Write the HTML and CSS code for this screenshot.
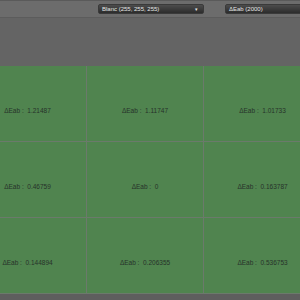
FILE: index.html
```html
<html>
  <head>
    <link rel="stylesheet" href="styles.css">
  </head>
  <body>
    <div class="toolbar">
      <div class="dropdown illum">
        <span>Blanc (255, 255, 255)</span>
        <span class="arrow">&#9662;</span>
      </div>
      <div class="dropdown metric">
        <span>&Delta;Eab (2000)</span>
      </div>
    </div>
    <div class="spacer"></div>
    <div class="view">
      <div class="grid">
        <div class="cell">&Delta;Eab :&nbsp; 1.21487</div>
        <div class="cell">&Delta;Eab :&nbsp; 1.11747</div>
        <div class="cell">&Delta;Eab :&nbsp; 1.01733</div>
        <div class="cell">&Delta;Eab :&nbsp; 0.46759</div>
        <div class="cell">&Delta;Eab :&nbsp; 0</div>
        <div class="cell">&Delta;Eab :&nbsp; 0.163787</div>
        <div class="cell">&Delta;Eab :&nbsp; 0.144894</div>
        <div class="cell">&Delta;Eab :&nbsp; 0.206355</div>
        <div class="cell">&Delta;Eab :&nbsp; 0.536753</div>
      </div>
    </div>
    <div class="footer"></div>
  </body>
</html>
```
FILE: styles.css
```css
body {
  margin: 0;
  width: 300px;
  height: 300px;
  overflow: hidden;
  background: #646464;
  font-family: "Liberation Sans", Arial, sans-serif;
}
.toolbar {
  height: 18px;
  box-sizing: border-box;
  background: #6c6c6c;
  border-top: 1px solid #5a5a5a;
  border-bottom: 1px solid #5c5c5c;
  display: flex;
  align-items: center;
  overflow: hidden;
}
.dropdown {
  height: 10px;
  box-sizing: border-box;
  flex-shrink: 0;
  background: linear-gradient(#4c4c4c, #2c2c2c);
  border: 1px solid #3a3a3a;
  border-radius: 2px;
  color: #e6e6e6;
  font-size: 6px;
  display: flex;
  align-items: center;
  justify-content: space-between;
  padding: 0 3px;
}
.illum {
  margin-left: 98px;
  width: 106px;
}
.metric {
  margin-left: 21px;
  width: 90px;
}
.arrow {
  font-size: 5px;
  margin-right: 2px;
}
.spacer {
  height: 48px;
}
.view {
  overflow: hidden;
}
.grid {
  margin-left: -31px;
  width: 352px;
  display: grid;
  grid-template-columns: 117px 116px 117px;
  grid-auto-rows: 75px;
  gap: 1px;
  background: #6b7a6b;
  border-bottom: 1px solid #6b7a6b;
}
.cell {
  background: #50844f;
  color: #27322a;
  font-size: 6.5px;
  display: flex;
  align-items: center;
  justify-content: center;
  padding-top: 13px;
  box-sizing: border-box;
}
.footer {
  height: 6px;
  background: #5e5e5e;
}
```
